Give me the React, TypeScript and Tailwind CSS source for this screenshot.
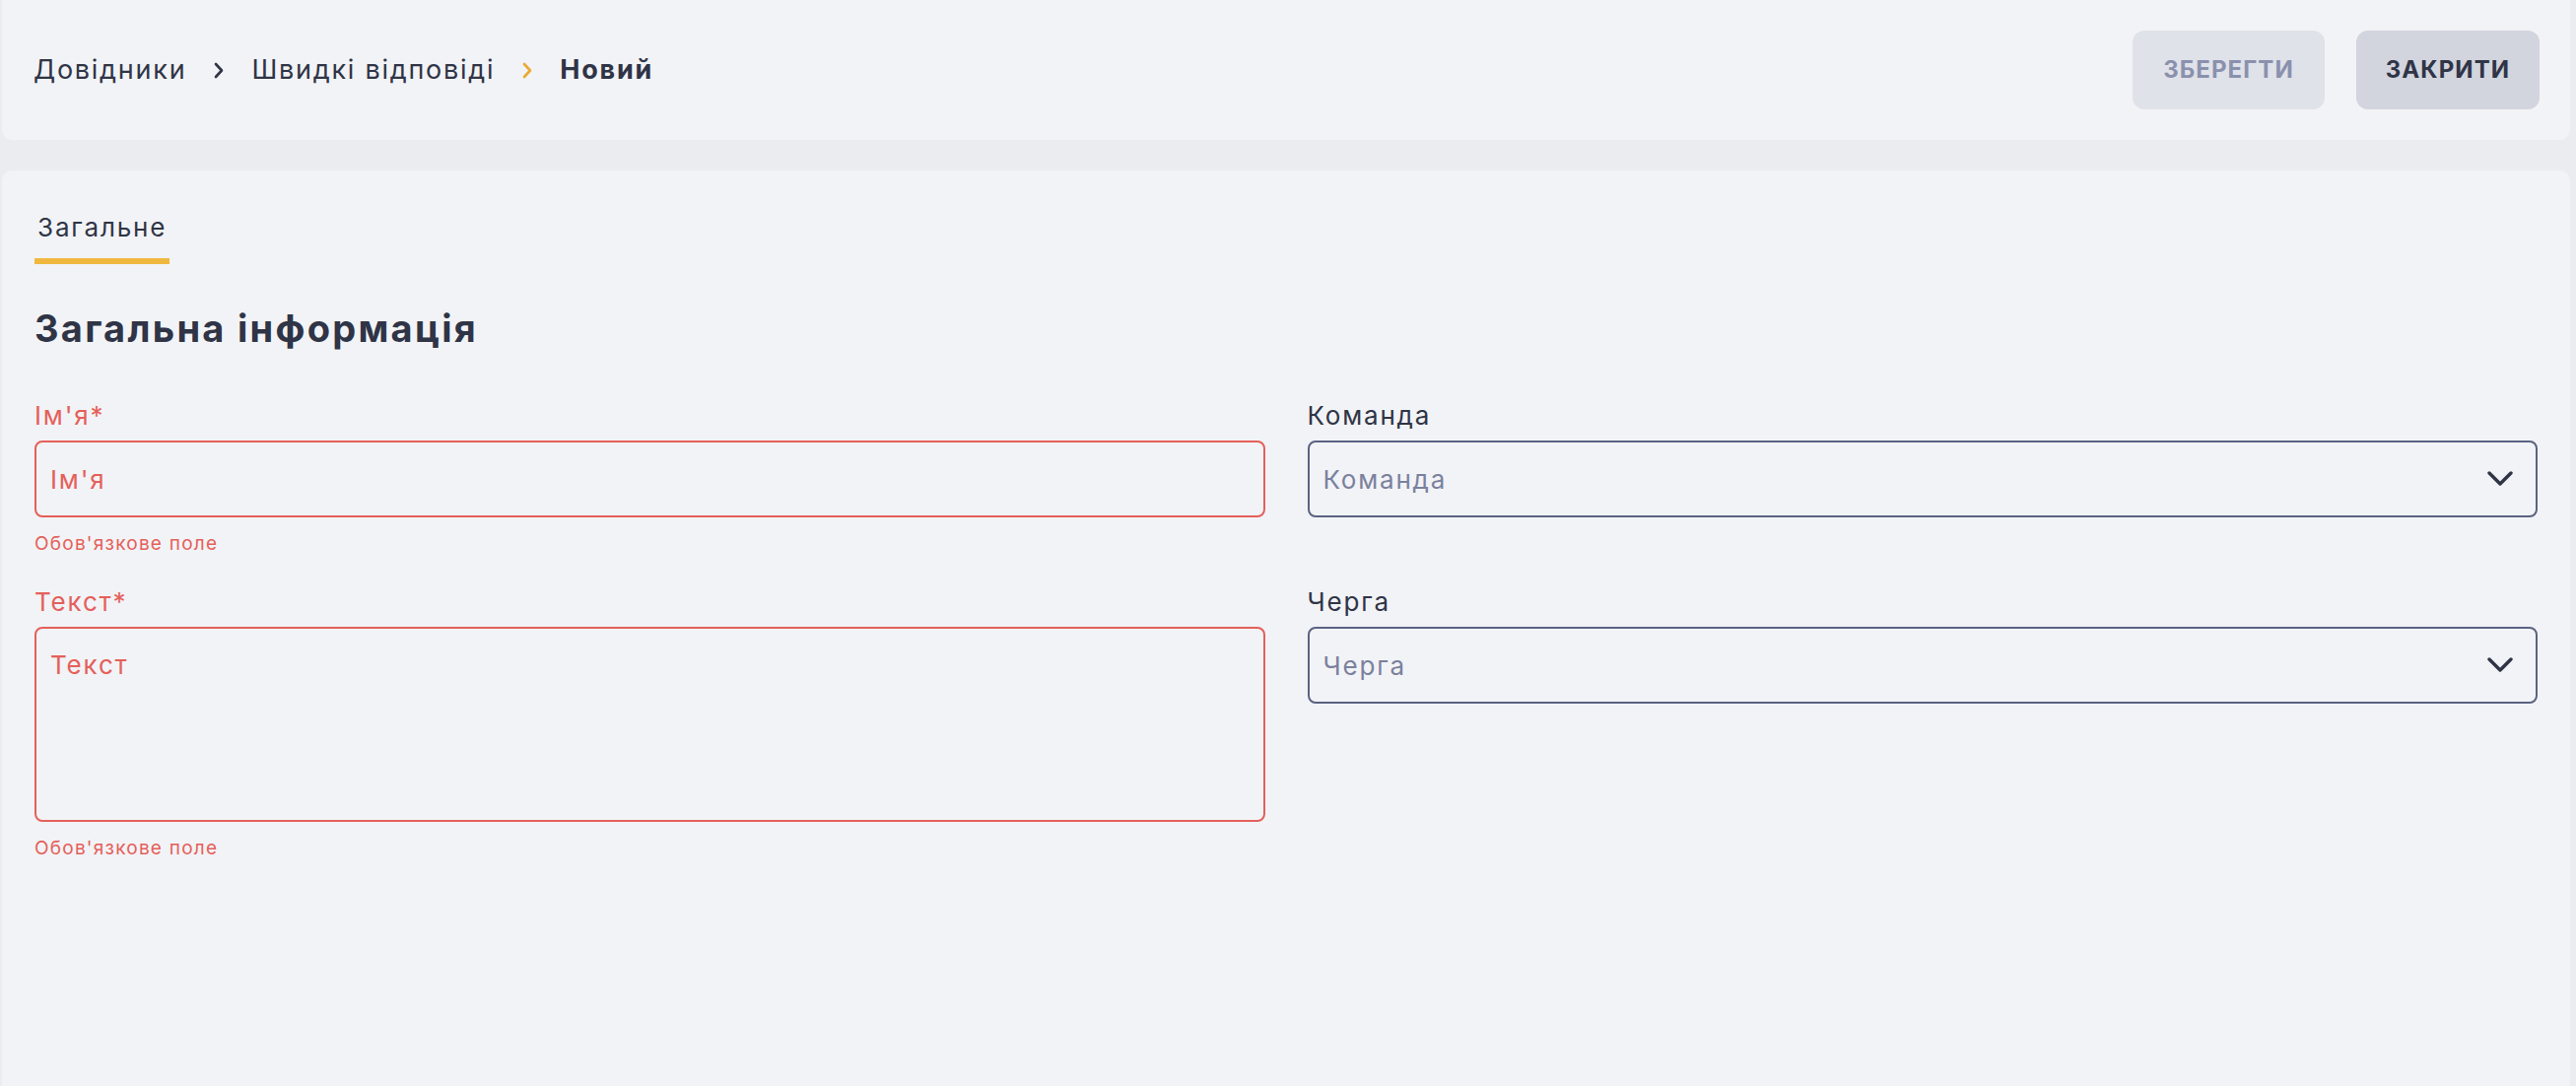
import React from "react";

const FONT = "font-['Inter','Noto_Sans',sans-serif]";

function Crumb({ color }: { color: string }) {
  return (
    <svg width="10" height="17" viewBox="0 0 10 17" fill="none" className="shrink-0">
      <path d="M2 2 L8 8.5 L2 15" stroke={color} strokeWidth="2.6" strokeLinecap="round" strokeLinejoin="round" />
    </svg>
  );
}

function ChevronDown() {
  return (
    <svg width="28" height="18" viewBox="0 0 28 18" fill="none" className="shrink-0">
      <path d="M3 3 L14 14 L25 3" stroke="#2f3446" strokeWidth="3.4" strokeLinecap="round" strokeLinejoin="round" />
    </svg>
  );
}

function Label({ text, error }: { text: string; error?: boolean }) {
  return (
    <div
      className={`h-[32px] text-[26px] leading-[32px] tracking-[0.07em] ${error ? "text-[#e4605a]" : "text-[#2f3446]"}`}
    >
      {text}
    </div>
  );
}

function ErrorText() {
  return (
    <div className="mt-[15px] h-[24px] text-[19px] leading-[24px] tracking-[0.065em] text-[#e4605a]">
      Обов'язкове поле
    </div>
  );
}

function SelectBox({ placeholder }: { placeholder: string }) {
  return (
    <div className="mt-[9px] flex h-[78px] items-center justify-between rounded-[8px] border-2 border-[#5b6282] pl-[14px] pr-[22px]">
      <span className="text-[26px] tracking-[0.07em] text-[#7a819e]">{placeholder}</span>
      <ChevronDown />
    </div>
  );
}

export default function App() {
  return (
    <div className={`min-h-screen bg-[#ebecf0] pl-[2px] pr-[6px] ${FONT}`}>
      {/* top bar with breadcrumbs and actions */}
      <header className="flex h-[142px] items-center justify-between rounded-b-[10px] bg-[#f2f3f6] pl-[32px] pr-[31px]">
        <nav className="flex items-center text-[27px] tracking-[0.065em] text-[#2f3446]">
          <span>Довідники</span>
          <span className="mx-[28px] flex items-center"><Crumb color="#2f3446" /></span>
          <span>Швидкі відповіді</span>
          <span className="mx-[28px] flex items-center"><Crumb color="#eaa934" /></span>
          <span className="font-bold">Новий</span>
        </nav>
        <div className="flex items-center gap-[32px]">
          <button className="flex h-[80px] w-[195px] items-center justify-center rounded-[12px] bg-[#e0e2e9] text-[24px] font-bold tracking-[0.045em] text-[#8a91ad]">
            ЗБЕРЕГТИ
          </button>
          <button className="flex h-[80px] w-[186px] items-center justify-center rounded-[12px] bg-[#d2d4de] text-[24px] font-bold tracking-[0.045em] text-[#2f3446]">
            ЗАКРИТИ
          </button>
        </div>
      </header>

      {/* form card */}
      <main className="mt-[31px] min-h-[929px] rounded-t-[10px] bg-[#f2f3f6] px-[33px] pt-[43px]">
        <div className="flex">
          <div className="border-b-[6px] border-[#f0b83f] px-[3px] pb-[16px]">
            <span className="block text-[26px] leading-[30px] tracking-[0.07em] text-[#2f3446]">Загальне</span>
          </div>
        </div>

        <h1 className="mt-[42px] text-[38px] font-bold leading-[46px] tracking-[0.06em] text-[#2f3446]">
          Загальна інформація
        </h1>

        <div className="mt-[50px] grid grid-cols-2 gap-x-[43px] gap-y-[31px]">
          <div>
            <Label text="Ім'я*" error />
            <div className="mt-[9px] flex h-[78px] items-center rounded-[8px] border-2 border-[#e4605a] px-[14px]">
              <span className="text-[26px] tracking-[0.07em] text-[#e4605a]">Ім'я</span>
            </div>
            <ErrorText />
          </div>
          <div>
            <Label text="Команда" />
            <SelectBox placeholder="Команда" />
          </div>
          <div>
            <Label text="Текст*" error />
            <div className="mt-[9px] h-[198px] rounded-[8px] border-2 border-[#e4605a] px-[14px] pt-[21px]">
              <span className="block text-[26px] leading-[32px] tracking-[0.07em] text-[#e4605a]">Текст</span>
            </div>
            <ErrorText />
          </div>
          <div>
            <Label text="Черга" />
            <SelectBox placeholder="Черга" />
          </div>
        </div>
      </main>
    </div>
  );
}
